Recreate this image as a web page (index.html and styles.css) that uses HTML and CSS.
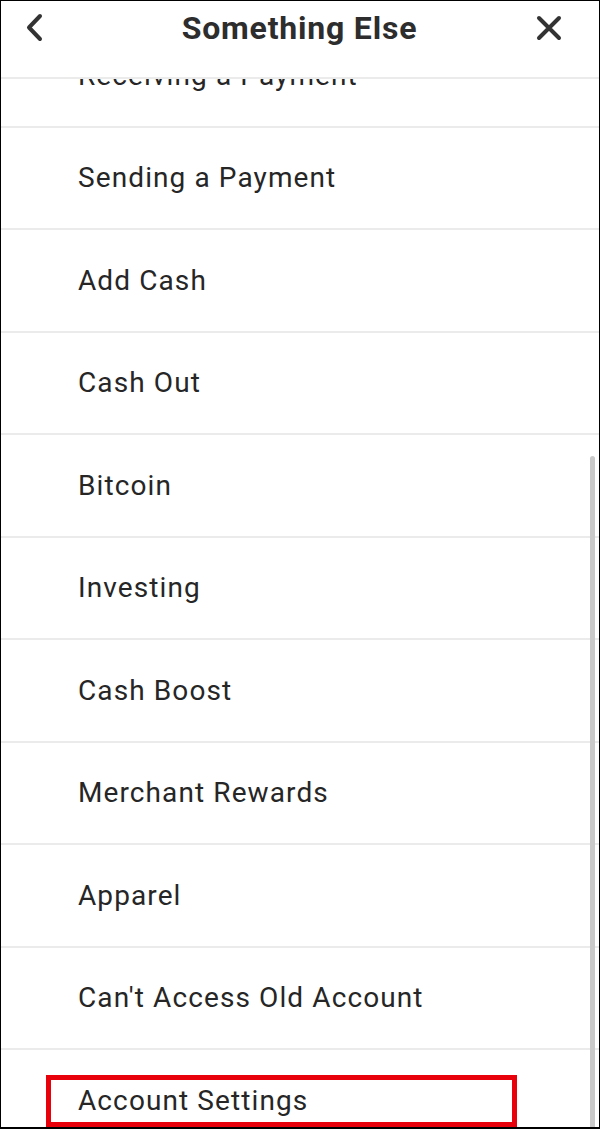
FILE: index.html
```html
<!DOCTYPE html>
<html lang="en">
<head>
  <meta charset="UTF-8">
  <title>Something Else</title>
  <link rel="stylesheet" href="styles.css">
</head>
<body>
  <div class="screen">
    <header class="topbar">
      <svg class="icon back" width="24" height="34" viewBox="0 0 24 34">
        <polyline points="17,4 6,15.5 17,27" fill="none" stroke="#333" stroke-width="4" stroke-linecap="round" stroke-linejoin="round"/>
      </svg>
      <h1>Something Else</h1>
      <svg class="icon close" width="30" height="30" viewBox="0 0 30 30">
        <path d="M5 5 L25 25 M25 5 L5 25" fill="none" stroke="#333" stroke-width="4" stroke-linecap="round"/>
      </svg>
    </header>

    <ul class="topics">
      <li>Receiving a Payment</li>
      <li>Sending a Payment</li>
      <li>Add Cash</li>
      <li>Cash Out</li>
      <li>Bitcoin</li>
      <li>Investing</li>
      <li>Cash Boost</li>
      <li>Merchant Rewards</li>
      <li>Apparel</li>
      <li>Can't Access Old Account</li>
      <li class="highlight"><span>Account Settings</span></li>
    </ul>

    <div class="scrollbar"></div>
  </div>
</body>
</html>
```

FILE: styles.css
```css
* {
  box-sizing: border-box;
}
body {
  margin: 0;
  font-family: Roboto, 'Liberation Sans', sans-serif;
  background: #fff;
}
.screen {
  position: relative;
  width: 600px;
  height: 1129px;
  overflow: hidden;
  border: 1px solid #000;
  border-bottom-width: 2px;
  background: #fff;
}
.topbar {
  position: relative;
  z-index: 2;
  height: 78px;
  display: flex;
  align-items: flex-start;
  justify-content: space-between;
  padding: 9px 35px 0 22px;
  background: #fff;
  border-bottom: 2px solid #ebebeb;
}
.topbar h1 {
  margin: 0 0 0 18px;
  font-size: 32px;
  font-weight: 700;
  color: #2d2d2d;
  line-height: 36px;
  letter-spacing: 0.8px;
}
.icon {
  display: block;
}
.back {
  margin-top: 2px;
}
.close {
  margin-top: 3px;
}
.topics {
  list-style: none;
  margin: -54px 0 0;
  padding: 0;
}
.topics li {
  height: 102.5px;
  display: flex;
  align-items: center;
  padding-left: 77px;
  font-size: 28px;
  letter-spacing: 1.1px;
  color: #262626;
  border-bottom: 2px solid #ebebeb;
}
.topics li.highlight {
  border-bottom: none;
  padding-left: 45px;
  align-items: flex-start;
  padding-top: 25px;
}
.highlight span {
  display: block;
  width: 471px;
  height: 52px;
  padding: 0 0 0 27px;
  line-height: 42px;
  border: 5px solid #e8000b;
}
.scrollbar {
  position: absolute;
  z-index: 3;
  left: 589px;
  top: 455px;
  width: 5px;
  height: 700px;
  border-radius: 3px;
  background: #c9c9c9;
}
```
